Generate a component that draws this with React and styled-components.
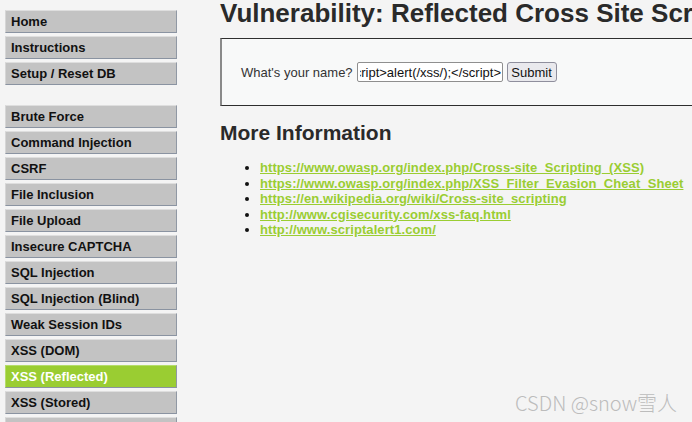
import React, { useEffect, useRef } from "react";
import styled, { createGlobalStyle } from "styled-components";

const GlobalStyle = createGlobalStyle`
  html, body {
    margin: 0;
    padding: 0;
    background: #f4f4f4;
    overflow: hidden;
  }
  body {
    font-family: "Liberation Sans", Arial, sans-serif;
    color: #2a2a2a;
  }
`;

const Page = styled.div`
  position: relative;
  display: flex;
  align-items: flex-start;
  width: 692px;
  height: 422px;
  overflow: hidden;
`;

const Menu = styled.nav`
  width: 172px;
  padding: 10px 0 0 5px;
  margin-right: 43px;
  flex-shrink: 0;
`;

const MenuGroup = styled.ul`
  list-style: none;
  margin: 0 0 20px;
  padding: 0;
  display: flex;
  flex-direction: column;
  gap: 3px;
`;

const MenuItem = styled.li`
  height: 21px;
  display: flex;
  align-items: center;
  padding-left: 5px;
  font-size: 13px;
  font-weight: bold;
  color: ${({ $active }) => ($active ? "#ffffff" : "#111")};
  background: ${({ $active }) => ($active ? "#9acd32" : "#c3c3c3")};
  border-top: 1px solid ${({ $active }) => ($active ? "#b5dc6a" : "#dedede")};
  border-left: 1px solid ${({ $active }) => ($active ? "#b5dc6a" : "#d6d6d6")};
  border-right: 1px solid #9098a4;
  border-bottom: 1px solid #8a93a1;
`;

const Main = styled.main`
  flex: 1;
  min-width: 0;
`;

const Title = styled.h1`
  margin: 0;
  font-size: 26px;
  line-height: 26px;
  font-weight: bold;
  color: #2a2a2a;
  white-space: nowrap;
`;

const CodeArea = styled.div`
  margin-top: 12px;
  width: 560px;
  height: 68px;
  box-sizing: border-box;
  background: #f8f9f9;
  border-top: 1px solid #2e2e2e;
  border-bottom: 1px solid #2e2e2e;
  border-left: 2px solid #8a8a8a;
  display: flex;
  align-items: center;
  padding-left: 19px;
  font-size: 13px;
  color: #333;
`;

const Label = styled.span`
  margin-right: 4px;
`;

const NameInput = styled.input`
  width: 146px;
  height: 20px;
  box-sizing: border-box;
  border: 1px solid #8f8f8f;
  border-radius: 2px;
  background: #fff;
  padding: 0 1px 0 2px;
  font-family: "Liberation Sans", Arial, sans-serif;
  font-size: 13px;
  color: #111;
  outline: none;
`;

const SubmitButton = styled.button`
  margin-left: 4px;
  width: 50px;
  height: 20px;
  box-sizing: border-box;
  padding: 0;
  border: 1px solid #8f8f9d;
  border-radius: 3px;
  background: #e9e9ed;
  font-family: "Liberation Sans", Arial, sans-serif;
  font-size: 13px;
  color: #111;
`;

const SubTitle = styled.h2`
  margin: 15px 0 0;
  font-size: 21px;
  line-height: 24px;
  font-weight: bold;
  color: #2a2a2a;
`;

const LinkList = styled.ul`
  margin: 15px 0 0;
  padding-left: 40px;
  list-style: disc;
  font-size: 13px;
  line-height: 15.5px;
  color: #111;
`;

const Link = styled.a`
  color: #9acd32;
  font-weight: bold;
  letter-spacing: 0.08px;
  text-decoration: underline;
  white-space: nowrap;
`;

const Watermark = styled.div`
  position: absolute;
  right: 15px;
  bottom: 5px;
  font-family: "Noto Sans CJK SC", "Noto Sans", sans-serif;
  font-size: 20px;
  font-weight: 300;
  color: #bcbcbc;
`;

const groups = [
  ["Home", "Instructions", "Setup / Reset DB"],
  [
    "Brute Force",
    "Command Injection",
    "CSRF",
    "File Inclusion",
    "File Upload",
    "Insecure CAPTCHA",
    "SQL Injection",
    "SQL Injection (Blind)",
    "Weak Session IDs",
    "XSS (DOM)",
    "XSS (Reflected)",
    "XSS (Stored)",
    "CSP Bypass",
  ],
];

const links = [
  "https://www.owasp.org/index.php/Cross-site_Scripting_(XSS)",
  "https://www.owasp.org/index.php/XSS_Filter_Evasion_Cheat_Sheet",
  "https://en.wikipedia.org/wiki/Cross-site_scripting",
  "http://www.cgisecurity.com/xss-faq.html",
  "http://www.scriptalert1.com/",
];

export default function App() {
  const inputRef = useRef(null);

  useEffect(() => {
    const el = inputRef.current;
    if (el) el.scrollLeft = el.scrollWidth;
  }, []);

  return (
    <>
      <GlobalStyle />
      <Page>
        <Menu>
          {groups.map((group, i) => (
            <MenuGroup key={i}>
              {group.map((item) => (
                <MenuItem key={item} $active={item === "XSS (Reflected)"}>
                  {item}
                </MenuItem>
              ))}
            </MenuGroup>
          ))}
        </Menu>
        <Main>
          <Title>Vulnerability: Reflected Cross Site Scripting (XSS)</Title>
          <CodeArea>
            <Label>What's your name?</Label>
            <NameInput
              ref={inputRef}
              defaultValue="<script>alert(/xss/);</script>"
            />
            <SubmitButton>Submit</SubmitButton>
          </CodeArea>
          <SubTitle>More Information</SubTitle>
          <LinkList>
            {links.map((href) => (
              <li key={href}>
                <Link href="#">{href}</Link>
              </li>
            ))}
          </LinkList>
        </Main>
        <Watermark>CSDN @snow雪人</Watermark>
      </Page>
    </>
  );
}
